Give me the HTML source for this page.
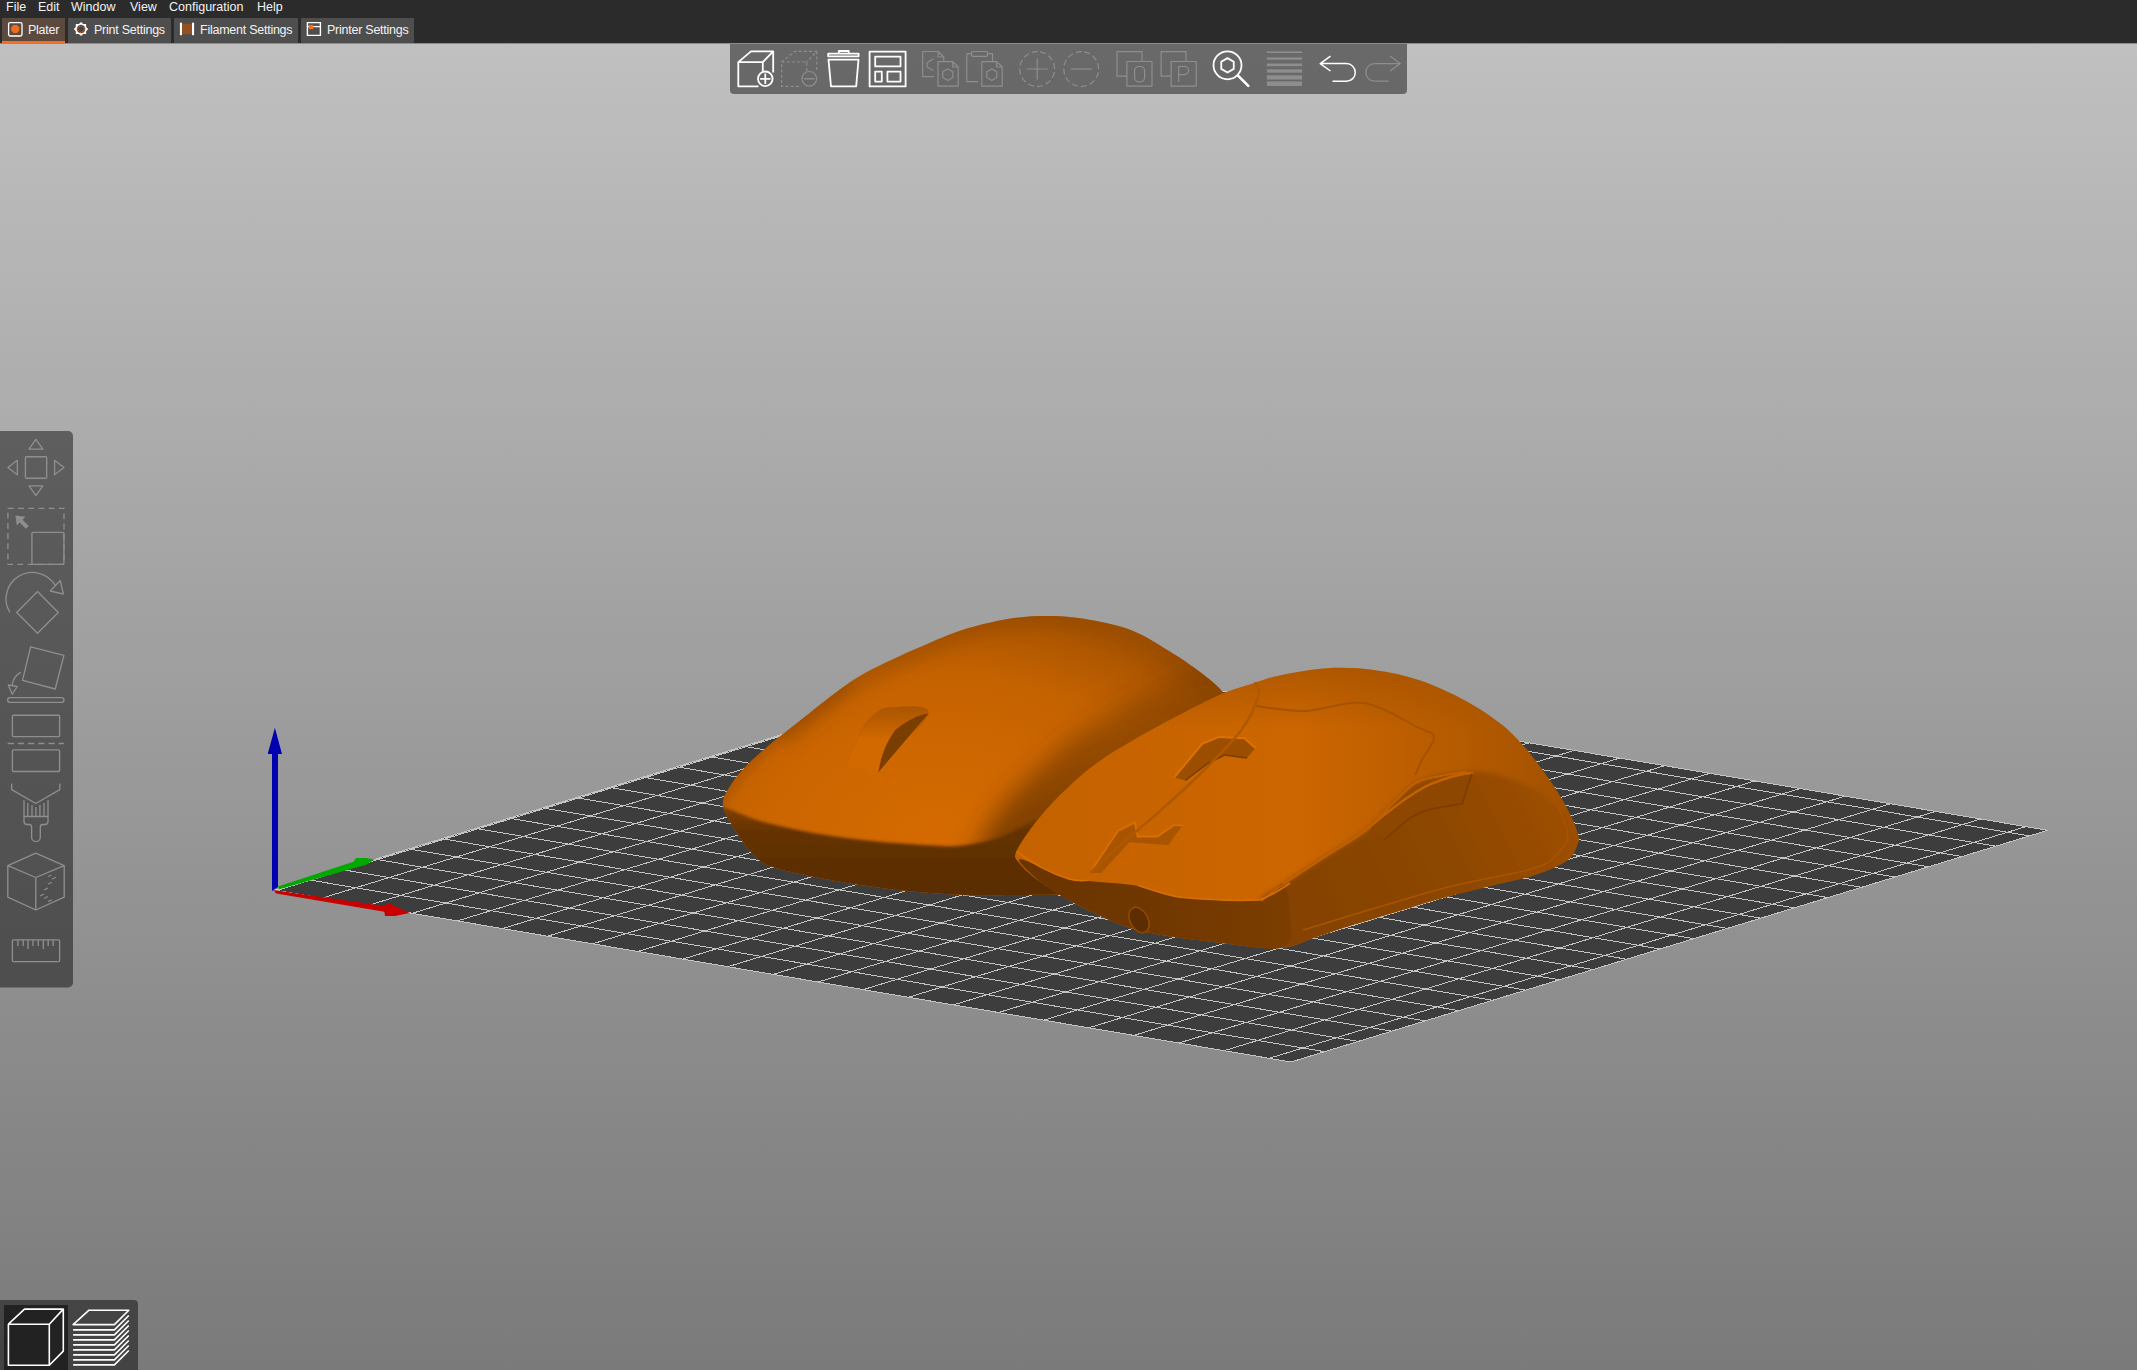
<!DOCTYPE html>
<html><head><meta charset="utf-8"><style>
html,body{margin:0;padding:0;}
body{width:2137px;height:1370px;overflow:hidden;position:relative;background:#2b2b2b;font-family:"Liberation Sans",sans-serif;}
#menubar{position:absolute;left:0;top:0;width:2137px;height:18px;background:#2b2b2b;}
#menubar span{position:absolute;top:0px;font-size:12.5px;color:#f2f2f2;line-height:15px;}
#tabbar{position:absolute;left:0;top:18px;width:2137px;height:26px;background:#2b2b2b;}
.tab{position:absolute;top:0;height:25px;background:#4e4e4e;}
.tab span{position:absolute;top:5px;font-size:12.5px;color:#f2f2f2;line-height:15px;white-space:nowrap;letter-spacing:-0.25px;}
#orange{position:absolute;left:0;top:43px;width:2137px;height:1px;background:#f56c22;}
#canvas{position:absolute;left:0;top:44px;width:2137px;height:1326px;background:linear-gradient(#c0c0c0,#7a7a7a);}
svg{position:absolute;left:0;top:0;}
</style></head><body>
<div id="menubar">
<span style="left:6px">File</span><span style="left:38px">Edit</span><span style="left:71px">Window</span><span style="left:130px">View</span><span style="left:169px">Configuration</span><span style="left:257px">Help</span>
</div>
<div id="tabbar">
<div class="tab" style="left:2px;width:63px;background:#5c4a3e"><span style="left:26px">Plater</span><div style="position:absolute;left:0;top:23px;width:63px;height:3px;background:#f56c22"></div></div>
<div class="tab" style="left:68px;width:103px"><span style="left:26px">Print Settings</span></div>
<div class="tab" style="left:174px;width:124px"><span style="left:26px">Filament Settings</span></div>
<div class="tab" style="left:301px;width:113px"><span style="left:26px">Printer Settings</span></div>
</div>
<div id="orange"></div>
<div id="canvas"></div>
<svg width="2137" height="1370" viewBox="0 0 2137 1370">
<rect x="8.6" y="22.6" width="13.4" height="13.4" rx="1.5" fill="none" stroke="#fff" stroke-width="1.3"/>
<path d="M13.4 25H17L19.2 27.2V30.8L17 33H13.4L11.2 30.8V27.2Z" fill="#f06c22"/>
<path d="M81.05 21.9L83.2 24H86.1V26.9L88.2 29.05L86.1 31.2V34.1H83.2L81.05 36.1L78.9 34.1H75.8V31.2L73.8 29.05L75.8 26.9V24H78.9Z" fill="#fff"/>
<circle cx="81.05" cy="29.05" r="4.3" fill="#454545"/>
<circle cx="81.05" cy="29.05" r="3.4" fill="none" stroke="#e0621f" stroke-width="1.3" stroke-dasharray="1.4 1.27"/>
<rect x="179.9" y="22.7" width="2.1" height="12.5" fill="#fff"/>
<rect x="192" y="22.7" width="2.1" height="12.5" fill="#fff"/>
<rect x="182" y="23.8" width="10" height="10.3" fill="#96501f"/>
<path d="M307.4 22.6H320.4V35.4H307.4Z" fill="none" stroke="#fff" stroke-width="1.4"/>
<path d="M307.4 26.6H320.4" stroke="#fff" stroke-width="1.3"/>
<rect x="308.8" y="24.8" width="4.4" height="4.4" fill="#f56f20"/>

<path d="M274.5 890.0L1291.0 1062.0L2047.7 830.3L1030.0 658.6Z" fill="#3d3d3d"/>
<path d="M277.0 890.4L1032.5 659.0M322.1 898.1L1077.7 666.6M367.2 905.7L1122.8 674.3M412.3 913.3L1168.0 681.9M457.4 920.9L1213.1 689.5M502.5 928.6L1258.3 697.1M547.6 936.2L1303.4 704.7M592.7 943.8L1348.6 712.3M637.8 951.5L1393.7 720.0M682.9 959.1L1438.9 727.6M728.0 966.7L1484.0 735.2M773.1 974.4L1529.2 742.8M818.2 982.0L1574.3 750.4M863.3 989.6L1619.5 758.1M908.4 997.3L1664.6 765.7M953.5 1004.9L1709.8 773.3M998.6 1012.5L1755.0 780.9M1043.7 1020.2L1800.1 788.5M1088.8 1027.8L1845.3 796.1M1133.9 1035.4L1890.4 803.8M1179.0 1043.0L1935.6 811.4M1224.1 1050.7L1980.7 819.0M1269.2 1058.3L2025.9 826.6M308.0 879.7L1324.6 1051.7M341.6 869.5L1358.2 1041.4M375.1 859.2L1391.7 1031.2M408.6 848.9L1425.3 1020.9M442.1 838.7L1458.8 1010.6M475.6 828.4L1492.4 1000.3M509.1 818.2L1525.9 990.1M542.6 807.9L1559.5 979.8M576.1 797.6L1593.1 969.5M609.6 787.4L1626.6 959.2M643.1 777.1L1660.2 949.0M676.6 766.8L1693.7 938.7M710.1 756.6L1727.3 928.4M743.6 746.3L1760.8 918.1M777.1 736.1L1794.4 907.9M810.6 725.8L1828.0 897.6M844.1 715.5L1861.5 887.3M877.6 705.3L1895.1 877.0M911.1 695.0L1928.6 866.8M944.6 684.8L1962.2 856.5M978.1 674.5L1995.7 846.2M1011.6 664.2L2029.3 835.9" stroke="#c4c4c4" stroke-width="1" fill="none" shape-rendering="crispEdges"/>
<path d="M274.5 890.0L1291.0 1062.0L2047.7 830.3L1030.0 658.6Z" fill="none" stroke="#c4c4c4" stroke-width="1" shape-rendering="crispEdges"/>

<path d="M272 891L272 754L267.7 754L274.9 727.7L282 754L278 754L278 887Z" fill="#0000b0"/>
<path d="M278 886.4L353.4 861.8L356.2 858L366.1 858L374.5 859.4L364.7 865.4L363.3 865.4L279 889.2Z" fill="#00a800"/>
<path d="M273.4 889.9L384.3 906.1L388.5 902.9L409.6 913.1L394.9 915.9L385 915.9L384.3 911.7L276.2 893.4Z" fill="#c80000"/>

<defs>
<radialGradient id="m1top" gradientUnits="userSpaceOnUse" cx="935" cy="835" r="340" gradientTransform="translate(935 835) scale(1 0.68) translate(-935 -835)">
<stop offset="0" stop-color="#d46a00"/><stop offset="0.45" stop-color="#cc6600"/><stop offset="0.7" stop-color="#c46200"/><stop offset="0.88" stop-color="#b35900"/><stop offset="1" stop-color="#a55200"/>
</radialGradient>
<filter id="blur20" x="-50%" y="-50%" width="200%" height="200%"><feGaussianBlur stdDeviation="22"/></filter>
<filter id="blur3" x="-20%" y="-20%" width="140%" height="140%"><feGaussianBlur stdDeviation="2.5"/></filter>
<filter id="blur2" x="-20%" y="-20%" width="140%" height="140%"><feGaussianBlur stdDeviation="1.6"/></filter>
<filter id="blur4" x="-50%" y="-50%" width="200%" height="200%"><feGaussianBlur stdDeviation="4"/></filter>
<filter id="blur8" x="-50%" y="-50%" width="200%" height="200%"><feGaussianBlur stdDeviation="8"/></filter>
<filter id="blur12" x="-50%" y="-50%" width="200%" height="200%"><feGaussianBlur stdDeviation="12"/></filter>
<filter id="blur6" x="-50%" y="-50%" width="200%" height="200%"><feGaussianBlur stdDeviation="6"/></filter>
<clipPath id="m1clip"><path d="M723.1 806.0C721.9 798.6 725.8 793.8 729.2 787.6C732.7 781.4 737.9 775.1 743.8 768.6C749.7 762.1 755.7 756.6 764.7 748.9C773.7 741.2 783.4 733.7 797.6 722.6C811.8 711.5 835.0 692.4 850.0 682.3C865.0 672.2 874.9 668.0 887.4 661.8C899.9 655.6 912.4 650.2 924.9 644.9C937.4 639.6 948.3 634.3 962.3 629.9C976.3 625.5 995.1 621.0 1009.1 618.7C1023.1 616.4 1034.0 615.9 1046.5 615.9C1059.0 615.9 1070.0 616.4 1084.0 618.7C1098.0 621.0 1116.8 624.6 1130.8 629.9C1144.8 635.2 1157.3 643.9 1168.2 650.5C1179.1 657.1 1187.2 662.4 1196.3 669.3C1205.3 676.2 1214.4 682.4 1222.5 691.7C1230.6 701.0 1240.4 707.0 1245.0 725.0C1249.6 743.0 1257.5 774.2 1250.0 800.0C1242.5 825.8 1225.0 864.5 1200.0 880.0C1175.0 895.5 1131.7 890.5 1100.0 893.0C1068.3 895.5 1031.2 894.6 1010.0 895.0C988.8 895.4 989.9 896.2 972.8 895.5C955.6 894.8 929.0 893.2 907.1 891.0C885.2 888.8 863.3 885.8 841.4 882.0C819.5 878.2 790.3 872.5 775.7 868.0C761.1 863.5 760.4 861.0 753.8 855.0C747.2 849.0 741.4 840.2 736.3 832.0C731.2 823.8 724.3 813.4 723.1 806.0Z"/></clipPath>
<linearGradient id="m1sideg" gradientUnits="userSpaceOnUse" x1="0" y1="812" x2="0" y2="880">
<stop offset="0" stop-color="#7a3d00"/><stop offset="0.3" stop-color="#643200"/><stop offset="1" stop-color="#5a2d00"/>
</linearGradient>
<linearGradient id="m2base" gradientUnits="userSpaceOnUse" x1="1017" y1="0" x2="1578" y2="0">
<stop offset="0" stop-color="#c46200"/><stop offset="0.5" stop-color="#cc6600"/><stop offset="0.78" stop-color="#b65b00"/><stop offset="1" stop-color="#a05000"/>
</linearGradient>
<linearGradient id="m2topg" gradientUnits="userSpaceOnUse" x1="0" y1="668" x2="0" y2="730">
<stop offset="0" stop-color="#9a4d00" stop-opacity="0.55"/><stop offset="1" stop-color="#9a4d00" stop-opacity="0"/>
</linearGradient>
<linearGradient id="m2sideg" gradientUnits="userSpaceOnUse" x1="1280" y1="930" x2="1560" y2="790">
<stop offset="0" stop-color="#844200"/><stop offset="0.55" stop-color="#8c4600"/><stop offset="1" stop-color="#9e4f00"/>
</linearGradient>
<linearGradient id="m2frontg" gradientUnits="userSpaceOnUse" x1="1020" y1="0" x2="1290" y2="0">
<stop offset="0" stop-color="#6a3400"/><stop offset="0.5" stop-color="#703700"/><stop offset="1" stop-color="#7c3e00"/>
</linearGradient>
<clipPath id="m2clip"><path d="M1017.2 849.6C1021.5 840.7 1033.7 823.7 1045.7 810.2C1057.8 796.7 1074.9 780.3 1089.5 768.6C1104.1 756.9 1118.7 748.9 1133.3 740.1C1147.9 731.4 1162.5 723.8 1177.1 716.1C1191.7 708.5 1208.1 699.7 1220.9 694.2C1233.7 688.7 1243.7 686.4 1253.7 683.2C1263.7 680.1 1268.6 677.8 1280.8 675.3C1293.0 672.8 1311.2 669.1 1326.7 668.2C1342.2 667.3 1357.9 667.9 1373.5 669.9C1389.1 671.9 1404.6 675.1 1420.2 680.4C1435.8 685.6 1453.3 694.0 1466.9 701.4C1480.5 708.8 1492.3 717.0 1502.0 724.8C1511.7 732.6 1517.5 739.1 1525.3 748.1C1533.1 757.1 1541.7 768.4 1548.7 778.5C1555.7 788.6 1562.5 799.5 1567.4 808.9C1572.3 818.2 1576.4 828.4 1577.9 834.6C1579.5 840.8 1578.5 842.0 1576.7 846.3C1575.0 850.6 1574.0 855.6 1567.4 860.3C1560.8 865.0 1549.8 870.0 1537.0 874.3C1524.2 878.6 1505.9 882.1 1490.3 886.0C1474.7 889.9 1459.2 893.4 1443.6 897.7C1428.0 902.0 1412.4 907.0 1396.8 911.7C1381.2 916.4 1363.7 921.4 1350.1 925.7C1336.5 930.0 1326.7 933.7 1315.0 937.4C1303.3 941.1 1295.1 946.9 1280.0 947.9C1264.9 948.9 1247.9 946.2 1224.6 943.4C1201.3 940.5 1163.8 936.6 1140.4 930.8C1117.0 924.9 1100.6 916.3 1084.2 908.3C1067.8 900.3 1052.8 890.5 1042.1 883.0C1031.3 875.5 1023.9 869.0 1019.7 863.4C1015.6 857.8 1012.9 858.5 1017.2 849.6Z"/></clipPath>
</defs>
<path d="M723.1 806.0C721.9 798.6 725.8 793.8 729.2 787.6C732.7 781.4 737.9 775.1 743.8 768.6C749.7 762.1 755.7 756.6 764.7 748.9C773.7 741.2 783.4 733.7 797.6 722.6C811.8 711.5 835.0 692.4 850.0 682.3C865.0 672.2 874.9 668.0 887.4 661.8C899.9 655.6 912.4 650.2 924.9 644.9C937.4 639.6 948.3 634.3 962.3 629.9C976.3 625.5 995.1 621.0 1009.1 618.7C1023.1 616.4 1034.0 615.9 1046.5 615.9C1059.0 615.9 1070.0 616.4 1084.0 618.7C1098.0 621.0 1116.8 624.6 1130.8 629.9C1144.8 635.2 1157.3 643.9 1168.2 650.5C1179.1 657.1 1187.2 662.4 1196.3 669.3C1205.3 676.2 1214.4 682.4 1222.5 691.7C1230.6 701.0 1240.4 707.0 1245.0 725.0C1249.6 743.0 1257.5 774.2 1250.0 800.0C1242.5 825.8 1225.0 864.5 1200.0 880.0C1175.0 895.5 1131.7 890.5 1100.0 893.0C1068.3 895.5 1031.2 894.6 1010.0 895.0C988.8 895.4 989.9 896.2 972.8 895.5C955.6 894.8 929.0 893.2 907.1 891.0C885.2 888.8 863.3 885.8 841.4 882.0C819.5 878.2 790.3 872.5 775.7 868.0C761.1 863.5 760.4 861.0 753.8 855.0C747.2 849.0 741.4 840.2 736.3 832.0C731.2 823.8 724.3 813.4 723.1 806.0Z" fill="url(#m1top)"/>
<linearGradient id="bandg" gradientUnits="userSpaceOnUse" x1="0" y1="680" x2="0" y2="860"><stop offset="0" stop-color="#6e3700" stop-opacity="0.35"/><stop offset="0.6" stop-color="#6e3700" stop-opacity="0.7"/><stop offset="1" stop-color="#6e3700" stop-opacity="0.9"/></linearGradient>
<g clip-path="url(#m1clip)"><path d="M716 812C725 790 745 768 764.7 748.9C780 735 790 728 797.6 722.6C815 710 835 695 850 682.3" fill="none" stroke="#8a4500" stroke-opacity="0.35" stroke-width="12" filter="url(#blur4)"/></g>
<g clip-path="url(#m1clip)"><path d="M780.0 738.0C782.9 735.4 785.9 731.9 797.6 722.6C809.3 713.3 835.0 692.4 850.0 682.3C865.0 672.2 874.9 668.0 887.4 661.8C899.9 655.6 912.4 650.2 924.9 644.9C937.4 639.6 948.3 634.3 962.3 629.9C976.3 625.5 995.1 621.0 1009.1 618.7C1023.1 616.4 1034.0 615.9 1046.5 615.9C1059.0 615.9 1070.0 616.4 1084.0 618.7C1098.0 621.0 1116.8 624.6 1130.8 629.9C1144.8 635.2 1157.3 643.9 1168.2 650.5C1179.1 657.1 1187.2 662.4 1196.3 669.3C1205.3 676.2 1215.2 683.2 1222.5 691.7C1229.8 700.2 1237.1 715.3 1240.0 720.0" fill="none" stroke="#8a4500" stroke-opacity="0.4" stroke-width="24" filter="url(#blur8)"/></g>
<g clip-path="url(#m1clip)"><path d="M1235 680C1215 692 1195 705 1177 716C1160 727 1145 733 1133 740C1115 752 1100 760 1089.5 768.6C1070 786 1058 798 1045.7 810C1030 826 1022 838 1017 849C1010 862 1005 872 1000 885" fill="none" stroke="url(#bandg)" stroke-width="70" filter="url(#blur12)"/></g>
<g clip-path="url(#m1clip)"><path d="M723.1 807.5C730.4 808.5 744.5 816.7 760.0 821.0C775.5 825.3 797.3 830.2 816.0 833.5C834.7 836.8 853.2 839.0 872.0 841.0C890.8 843.0 913.5 844.5 928.5 845.2C943.5 846.0 950.1 846.9 962.0 845.5C973.9 844.1 986.2 841.9 1000.0 837.0C1013.8 832.1 1028.3 822.2 1045.0 816.0C1061.7 809.8 1082.5 791.0 1100.0 800.0C1117.5 809.0 1150.0 853.3 1150.0 870.0C1150.0 886.7 1123.3 894.2 1100.0 900.0C1076.7 905.8 1042.2 905.0 1010.0 905.0C977.9 905.0 946.1 904.2 907.1 900.0C868.1 895.8 806.9 888.3 775.7 880.0C744.5 871.7 730.0 860.8 720.0 850.0C710.0 839.2 715.5 822.1 716.0 815.0C716.5 807.9 715.8 806.5 723.1 807.5Z" fill="url(#m1sideg)" filter="url(#blur2)"/></g>
<linearGradient id="holeg" gradientUnits="userSpaceOnUse" x1="0" y1="707" x2="0" y2="740"><stop offset="0" stop-color="#a95500"/><stop offset="1" stop-color="#d26900"/></linearGradient>
<path d="M847.5 763.7C847.0 757.6 854.8 740.4 859.2 732.3C863.6 724.1 868.7 718.9 873.8 714.8C878.9 710.7 880.8 707.7 889.9 707.5C899.0 707.3 930.5 702.6 928.5 713.4C926.5 724.2 889.3 763.2 878.2 772.5C867.1 781.8 867.1 770.5 862.0 769.0C856.9 767.5 848.0 769.8 847.5 763.7Z" fill="url(#holeg)"/>
<path d="M847.5 763.7C852 748 862 728 873.8 714.8C878 711 884 708 889.9 707.5" fill="none" stroke="#a85400" stroke-width="0.8" stroke-dasharray="1 1.2"/>
<path d="M928.5 713.4C918 714.5 905 722 895.7 729.4C890 737 884 748 881.1 759.3L878.2 772.5Z" fill="#7a3e00"/>
<path d="M1017.2 849.6C1021.5 840.7 1033.7 823.7 1045.7 810.2C1057.8 796.7 1074.9 780.3 1089.5 768.6C1104.1 756.9 1118.7 748.9 1133.3 740.1C1147.9 731.4 1162.5 723.8 1177.1 716.1C1191.7 708.5 1208.1 699.7 1220.9 694.2C1233.7 688.7 1243.7 686.4 1253.7 683.2C1263.7 680.1 1268.6 677.8 1280.8 675.3C1293.0 672.8 1311.2 669.1 1326.7 668.2C1342.2 667.3 1357.9 667.9 1373.5 669.9C1389.1 671.9 1404.6 675.1 1420.2 680.4C1435.8 685.6 1453.3 694.0 1466.9 701.4C1480.5 708.8 1492.3 717.0 1502.0 724.8C1511.7 732.6 1517.5 739.1 1525.3 748.1C1533.1 757.1 1541.7 768.4 1548.7 778.5C1555.7 788.6 1562.5 799.5 1567.4 808.9C1572.3 818.2 1576.4 828.4 1577.9 834.6C1579.5 840.8 1578.5 842.0 1576.7 846.3C1575.0 850.6 1574.0 855.6 1567.4 860.3C1560.8 865.0 1549.8 870.0 1537.0 874.3C1524.2 878.6 1505.9 882.1 1490.3 886.0C1474.7 889.9 1459.2 893.4 1443.6 897.7C1428.0 902.0 1412.4 907.0 1396.8 911.7C1381.2 916.4 1363.7 921.4 1350.1 925.7C1336.5 930.0 1326.7 933.7 1315.0 937.4C1303.3 941.1 1295.1 946.9 1280.0 947.9C1264.9 948.9 1247.9 946.2 1224.6 943.4C1201.3 940.5 1163.8 936.6 1140.4 930.8C1117.0 924.9 1100.6 916.3 1084.2 908.3C1067.8 900.3 1052.8 890.5 1042.1 883.0C1031.3 875.5 1023.9 869.0 1019.7 863.4C1015.6 857.8 1012.9 858.5 1017.2 849.6Z" fill="url(#m2base)"/>
<path d="M1017.2 849.6C1021.5 840.7 1033.7 823.7 1045.7 810.2C1057.8 796.7 1074.9 780.3 1089.5 768.6C1104.1 756.9 1118.7 748.9 1133.3 740.1C1147.9 731.4 1162.5 723.8 1177.1 716.1C1191.7 708.5 1208.1 699.7 1220.9 694.2C1233.7 688.7 1243.7 686.4 1253.7 683.2C1263.7 680.1 1268.6 677.8 1280.8 675.3C1293.0 672.8 1311.2 669.1 1326.7 668.2C1342.2 667.3 1357.9 667.9 1373.5 669.9C1389.1 671.9 1404.6 675.1 1420.2 680.4C1435.8 685.6 1453.3 694.0 1466.9 701.4C1480.5 708.8 1492.3 717.0 1502.0 724.8C1511.7 732.6 1517.5 739.1 1525.3 748.1C1533.1 757.1 1541.7 768.4 1548.7 778.5C1555.7 788.6 1562.5 799.5 1567.4 808.9C1572.3 818.2 1576.4 828.4 1577.9 834.6C1579.5 840.8 1578.5 842.0 1576.7 846.3C1575.0 850.6 1574.0 855.6 1567.4 860.3C1560.8 865.0 1549.8 870.0 1537.0 874.3C1524.2 878.6 1505.9 882.1 1490.3 886.0C1474.7 889.9 1459.2 893.4 1443.6 897.7C1428.0 902.0 1412.4 907.0 1396.8 911.7C1381.2 916.4 1363.7 921.4 1350.1 925.7C1336.5 930.0 1326.7 933.7 1315.0 937.4C1303.3 941.1 1295.1 946.9 1280.0 947.9C1264.9 948.9 1247.9 946.2 1224.6 943.4C1201.3 940.5 1163.8 936.6 1140.4 930.8C1117.0 924.9 1100.6 916.3 1084.2 908.3C1067.8 900.3 1052.8 890.5 1042.1 883.0C1031.3 875.5 1023.9 869.0 1019.7 863.4C1015.6 857.8 1012.9 858.5 1017.2 849.6Z" fill="url(#m2topg)"/>
<g clip-path="url(#m2clip)"><path d="M1261.0 901.0C1263.3 894.2 1272.6 891.6 1283.6 884.0C1294.5 876.4 1312.9 864.6 1326.7 855.6C1340.5 846.6 1354.7 839.2 1366.4 829.9C1378.1 820.5 1387.8 807.7 1396.8 799.5C1405.8 791.3 1408.5 785.5 1420.2 780.8C1431.9 776.1 1453.6 772.5 1466.9 771.5C1480.2 770.5 1488.9 772.1 1500.0 775.0C1511.1 777.9 1523.5 783.3 1533.5 788.8C1543.5 794.3 1550.6 800.4 1560.0 808.0C1569.4 815.6 1585.0 825.9 1590.0 834.6C1595.0 843.3 1593.3 853.3 1590.0 860.0C1586.7 866.7 1578.8 871.0 1570.0 875.0C1561.2 879.0 1550.3 880.5 1537.0 884.0C1523.7 887.5 1505.9 892.0 1490.3 896.0C1474.7 900.0 1459.2 903.4 1443.6 907.7C1428.0 912.0 1412.4 917.0 1396.8 921.7C1381.2 926.4 1363.7 931.4 1350.1 935.7C1336.5 940.0 1326.2 943.9 1315.0 947.4C1303.8 950.9 1290.5 960.7 1283.0 957.0C1275.5 953.3 1273.7 934.3 1270.0 925.0C1266.3 915.7 1258.7 907.8 1261.0 901.0Z" fill="url(#m2sideg)" filter="url(#blur3)"/></g>
<path d="M1019.7 859.0C1024.2 858.3 1057.5 875.3 1069.0 879.0C1080.5 882.7 1077.0 879.8 1088.6 881.0C1100.2 882.2 1123.1 883.3 1138.4 886.0C1153.7 888.7 1160.2 895.0 1180.3 897.3C1200.4 899.6 1241.9 902.2 1259.0 900.0C1276.1 897.8 1277.8 881.5 1283.0 884.0C1288.2 886.5 1289.9 904.5 1290.0 915.0C1290.1 925.5 1294.5 942.3 1283.6 947.0C1272.7 951.7 1248.5 946.1 1224.6 943.4C1200.7 940.7 1163.8 936.6 1140.4 930.8C1117.0 924.9 1100.6 916.3 1084.2 908.3C1067.8 900.3 1052.8 891.2 1042.1 883.0C1031.3 874.8 1015.2 859.7 1019.7 859.0Z" fill="url(#m2frontg)"/>
<path d="M1369.3 827.6C1385 814 1410 795 1429.2 785.7C1445 779 1460 775 1471.2 773.7L1462.2 803.7C1450 806 1440 807 1429.2 809.6C1420 812 1412 816 1405.3 821.6L1384.3 839.6Z" fill="#8e4700"/>
<path d="M1366 830C1383 815 1410 794 1429.2 784.7C1445 778 1460 774 1472 772.7" fill="none" stroke="#c46200" stroke-width="2.4" stroke-linecap="round"/>
<path d="M1472 773.7L1462.2 803.7C1450 806 1440 807 1429.2 809.6C1420 812 1412 816 1405.3 821.6L1384.3 839.6" fill="none" stroke="#7a3d00" stroke-width="1.6" stroke-linejoin="round"/>
<path d="M1174 777.6L1202.2 743.9L1219 736.9L1244.3 738.3L1255.5 748.1L1247 758L1224.6 755.1L1207.8 763.5L1185.3 780.4Z" fill="#9c4e00"/>
<path d="M1174 777.6L1202.2 743.9L1219 736.9L1244.3 738.3L1255.5 748.1" fill="none" stroke="#dc7200" stroke-width="2"/>
<path d="M1185.3 780.4L1207.8 763.5L1224.6 755.1L1247 758" fill="none" stroke="#7a3d00" stroke-width="1.5"/>
<path d="M1089.8 873L1117.9 830.9L1134.8 822.5L1137.6 836.5L1157.2 836.5L1174 825.3L1182.5 825.3L1168.5 845L1129.2 842.2L1101.1 873Z" fill="#a85400"/>
<path d="M1089.8 873L1117.9 830.9L1134.8 822.5L1137.6 836.5L1157.2 836.5L1174 825.3L1182.5 825.3" fill="none" stroke="#d87000" stroke-width="1.8"/>
<path d="M1089.8 873.0C1095.4 867.9 1111.3 853.0 1123.5 842.2C1135.7 831.5 1149.7 820.2 1162.8 808.5C1175.9 796.8 1189.1 785.1 1202.2 772.0C1215.3 758.9 1232.2 742.4 1241.5 729.8C1250.8 717.2 1256.0 704.2 1258.3 696.2C1260.6 688.2 1256.0 684.5 1255.5 682.1" fill="none" stroke="#b05800" stroke-width="2.5"/>
<path d="M1256.0 706.0C1264.2 706.8 1287.0 711.5 1305.0 711.0C1323.0 710.5 1345.3 700.3 1364.0 703.0C1382.7 705.7 1405.3 721.3 1417.0 727.0C1428.7 732.7 1433.2 731.5 1434.0 737.0C1434.8 742.5 1425.2 753.7 1422.0 760.0C1418.8 766.3 1416.2 772.5 1415.0 775.0" fill="none" stroke="#a35200" stroke-width="1.8"/>
<path d="M1261.0 901.0C1264.8 898.2 1272.6 891.6 1283.6 884.0C1294.5 876.4 1312.9 864.6 1326.7 855.6C1340.5 846.6 1354.7 839.2 1366.4 829.9C1378.1 820.5 1387.8 807.7 1396.8 799.5C1405.8 791.3 1408.5 785.5 1420.2 780.8C1431.9 776.1 1459.1 773.0 1466.9 771.5" fill="none" stroke="#c06000" stroke-width="2"/>
<path d="M1303.0 930.0C1326.4 923.0 1404.9 898.6 1443.6 888.3C1482.3 878.0 1515.5 874.4 1535.0 868.0C1554.5 861.6 1555.0 856.0 1560.4 850.0C1565.8 844.0 1569.1 842.2 1567.4 832.2C1565.7 822.2 1557.0 804.0 1550.0 790.0C1543.0 776.0 1529.4 755.1 1525.3 748.1" fill="none" stroke="#a85400" stroke-width="1.5"/>
<path d="M1016.6 851.4C1030 862 1050 873 1069 879C1076 881 1082 881 1088.6 880.3" fill="none" stroke="#d87000" stroke-width="1.6"/>
<path d="M1138.4 885.5C1152 890 1165 895 1180.3 897.3C1210 900 1240 901 1259 900C1270 897 1280 890 1290 883" fill="none" stroke="#d87000" stroke-width="1.6"/>
<ellipse cx="1139" cy="920" rx="9" ry="13.5" transform="rotate(-28 1139 920)" fill="#5c2d00" stroke="#934a00" stroke-width="1.5"/>


<path d="M730 44H1407V90A4 4 0 0 1 1403 94H734A4 4 0 0 1 730 90Z" fill="#000" fill-opacity="0.45"/>
<g fill="none" stroke="#ffffff" stroke-width="1.8" stroke-linejoin="round">
 <!-- add cube -->
 <path d="M758.5 86.3H738.3V62.1H762.8V71.5M738.3 62.1L751 51.4H773.2L762.8 62.1M773.2 51.4V72.5"/>
 <circle cx="765.3" cy="78.8" r="7.3"/>
 <path d="M765.3 73.6V84M760.1 78.8H770.5"/>
 <!-- trash -->
 <path d="M828.2 53.6H858.6V56.3H828.2Z M838.8 53.6V51H848.7V53.6"/>
 <path d="M828.5 59.6H858.5L856.2 86.4H831Z"/>
 <!-- arrange -->
 <rect x="869.6" y="51.6" width="36" height="34.8"/>
 <rect x="875.2" y="56.6" width="25.3" height="9.8"/>
 <rect x="875.2" y="71.6" width="6.6" height="10"/>
 <rect x="887.4" y="71.6" width="13.1" height="10"/>
 <!-- search -->
 <circle cx="1227.5" cy="65.3" r="14"/>
 <path d="M1227.50 58.10L1233.74 61.70L1233.74 68.90L1227.50 72.50L1221.26 68.90L1221.26 61.70Z"/>
 <path d="M1237.8 75.4L1248.3 85.8" stroke-width="2.6" stroke-linecap="round"/>
 <!-- undo -->
 <path d="M1330.5 56.1L1320.2 63.6L1330.5 71M1320.2 63.6H1346.5A8.8 8.8 0 0 1 1346.5 81.2H1332.5" stroke-width="1.5"/>
</g>
<g fill="none" stroke="#8e8e8e" stroke-width="1.2" stroke-linejoin="round">
 <!-- delete dashed cube -->
 <path d="M806.7 71V62H781.6V86.4H801.5M781.6 62L794.9 51.4H816.8L806.7 62M816.8 51.4V71" stroke-dasharray="3 2.2"/>
 <circle cx="809.3" cy="78.8" r="7.3"/>
 <path d="M804.1 78.8H814.5" stroke-width="1.4"/>
 <!-- copy -->
 <path d="M934 76.6H922.7V51.5H938.2L943.8 57V61"/>
 <path d="M938 61.6H952.7L958.2 67V86.2H938Z M952.7 61.6V67H958.2"/>
 <path d="M938.2 51.5V57H943.8"/>
 <path d="M947.80 68.90L952.82 71.80L952.82 77.60L947.80 80.50L942.78 77.60L942.78 71.80Z"/>
 <path d="M933.6 58.7L927.1 62.8V66.9L933.1 70.6"/>
 <!-- paste -->
 <path d="M978 81.6H966.8V53.6H971.6M987.5 53.6H992.5V61"/>
 <rect x="971.6" y="51.5" width="15.9" height="4.8" rx="1"/>
 <path d="M981.8 61.6H996.7L1002.2 67V86.2H981.8Z M996.7 61.6V67H1002.2"/>
 <path d="M991.80 68.90L996.82 71.80L996.82 77.60L991.80 80.50L986.78 77.60L986.78 71.80Z"/>
 <!-- plus circle dashed -->
 <circle cx="1037.2" cy="69" r="17.4" stroke-dasharray="5.9 3.21" transform="rotate(-80 1037.2 69)"/>
 <path d="M1037.2 58.5V79.5M1026.7 69H1047.7"/>
 <!-- minus circle dashed -->
 <circle cx="1081.2" cy="69" r="17.4" stroke-dasharray="5.9 3.21" transform="rotate(-80 1081.2 69)"/>
 <path d="M1070.7 69H1091.7"/>
 <!-- split objects -->
 <path d="M1126.7 76.2H1117V51.6H1142V61.3"/>
 <rect x="1126.9" y="61.5" width="25.1" height="24.7"/>
 <rect x="1134.6" y="66.5" width="10" height="15.3" rx="4.2"/>
 <!-- split parts -->
 <path d="M1170.9 76.2H1161.1V51.6H1186V61.3"/>
 <rect x="1171.1" y="61.5" width="25.1" height="24.7"/>
 <path d="M1178.7 81.9V66.5H1184.5A4 4 0 0 1 1184.5 74.6H1178.7"/>
 <!-- redo -->
 <path d="M1390 56.1L1400.3 63.6L1390 71M1400.3 63.6H1374.6A8.8 8.8 0 0 0 1374.6 81.2H1388.5" stroke-width="1.2"/>
</g>
<g fill="#8e8e8e">
 <rect x="1266.9" y="51.4" width="35.2" height="1.6"/>
 <rect x="1266.9" y="57.4" width="35.2" height="2.3"/>
 <rect x="1266.9" y="63.5" width="35.2" height="2.7"/>
 <rect x="1266.9" y="69.3" width="35.2" height="3.4"/>
 <rect x="1266.9" y="75.3" width="35.2" height="4.2"/>
 <rect x="1266.9" y="81.4" width="35.2" height="4.6"/>
</g>


<path d="M0 431H68A5 5 0 0 1 73 436V982.5A5 5 0 0 1 68 987.5H0Z" fill="#000" fill-opacity="0.45"/>
<g fill="none" stroke="#8e8e8e" stroke-width="1.35" stroke-linejoin="round">
 <!-- move -->
 <rect x="25.4" y="456.7" width="21.3" height="21.5" rx="1"/>
 <path d="M29 449.1L35.9 439.3L42.8 449.1Z"/>
 <path d="M29 485.9L35.9 495.6L42.8 485.9Z"/>
 <path d="M17.3 460.3L7.9 467.5L17.3 474.8Z"/>
 <path d="M54.6 460.3L64 467.5L54.6 474.8Z"/>
 <!-- scale -->
 <path d="M7.9 508.3H64V564.4H7.9Z" stroke-dasharray="5.8 4.4"/>
 <rect x="31.9" y="532.3" width="32" height="32.1" rx="1"/>
 <!-- rotate -->
 <path d="M37.5 591.6L58.3 612.4L37.5 633.2L16.7 612.4Z"/>
 <path d="M9.8 612.4A26 26 0 0 1 55.2 585.4"/>
 <path d="M60.3 580.5L63.3 594L50.2 591Z"/>
 <!-- place on face -->
 <path d="M30.6 646.8L63.9 655.4L55.2 689L22.5 680.4Z"/>
 <rect x="7.6" y="697.6" width="56.4" height="4.8" rx="2.4"/>
 <path d="M20.9 672.2C16 675 12.5 680 12.3 685.3"/>
 <path d="M8.3 685L17.3 686.5L12.2 694.2Z"/>
 <!-- cut -->
 <rect x="12.4" y="715.2" width="47.2" height="21.4" rx="1"/>
 <rect x="12.4" y="749.9" width="47.2" height="21.6" rx="1"/>
 <path d="M7.7 743.5H63.8" stroke-dasharray="6.2 4"/>
 <!-- paint -->
 <path d="M11.7 783.6V789.7L35.8 803.5L59.8 789.7V783.6"/>
 <path d="M24 800.3V816.5H48V800.3M24 816.5V821.5A3 3 0 0 0 27 824.5H29A2.6 2.6 0 0 1 31.6 827.1V837.3A4.3 4.3 0 0 0 40.3 837.3V827.1A2.6 2.6 0 0 1 42.9 824.5H45A3 3 0 0 0 48 821.5V816.5"/>
 <path d="M27.8 803V816.5M32 805V816.5M35.9 807V816.5M39.9 805V816.5M44 803V816.5"/>
 <!-- seam cube -->
 <path d="M35.8 853.2L64.2 865.6V897.2L35.8 910L7.8 897.2V865.6Z M7.8 865.6L35.8 877.5L64.2 865.6M35.8 877.5V910"/>
 <path d="M48 876.5L51.5 875M52 879L56 877.2M48 884L52 882.3M44 890L48 888M40 896L44 894M44 898.5L48 896.6M48 901.5L52 899.8" stroke-width="1.1"/>
 <!-- ruler -->
 <rect x="12.4" y="939.8" width="47.2" height="21.8" rx="1"/>
 <path d="M17.9 940V945.9M23.2 940V945.9M28 940V949M33 940V945.9M38.2 940V945.9M43.3 940V949M48.2 940V945.9M53.1 940V945.9"/>
</g>
<path d="M15.4 515.5L25.5 516.8L22.6 519.7L28.8 525.9L25.9 528.8L19.7 522.6L16.8 525.5Z" fill="#8e8e8e"/>


<path d="M0 1300H134A4 4 0 0 1 138 1304V1370H0Z" fill="#000" fill-opacity="0.45"/>
<rect x="4" y="1305" width="64" height="65" fill="#222222"/>
<g fill="none" stroke="#ffffff" stroke-width="1.6" stroke-linejoin="round">
 <path d="M8.4 1324.2H49.3V1365.2H8.4Z M8.4 1324.2L24.5 1309.1H63.3V1351.1L49.3 1365.2 M49.3 1324.2L63.3 1309.1"/>
 <path d="M73.1 1324.6L89 1310.2H128.8L114.4 1324.6Z"/>
 <path d="M73.1 1329.9H114.4L128.8 1315.5M73.1 1334.9H114.4L128.8 1320.5M73.1 1339.9H114.4L128.8 1325.5M73.1 1344.9H114.4L128.8 1330.5M73.1 1349.9H114.4L128.8 1335.5M73.1 1354.9H114.4L128.8 1340.5M73.1 1359.9H114.4L128.8 1345.5M73.1 1364.9H114.4L128.8 1350.5"/>
</g>

</svg>
</body></html>
